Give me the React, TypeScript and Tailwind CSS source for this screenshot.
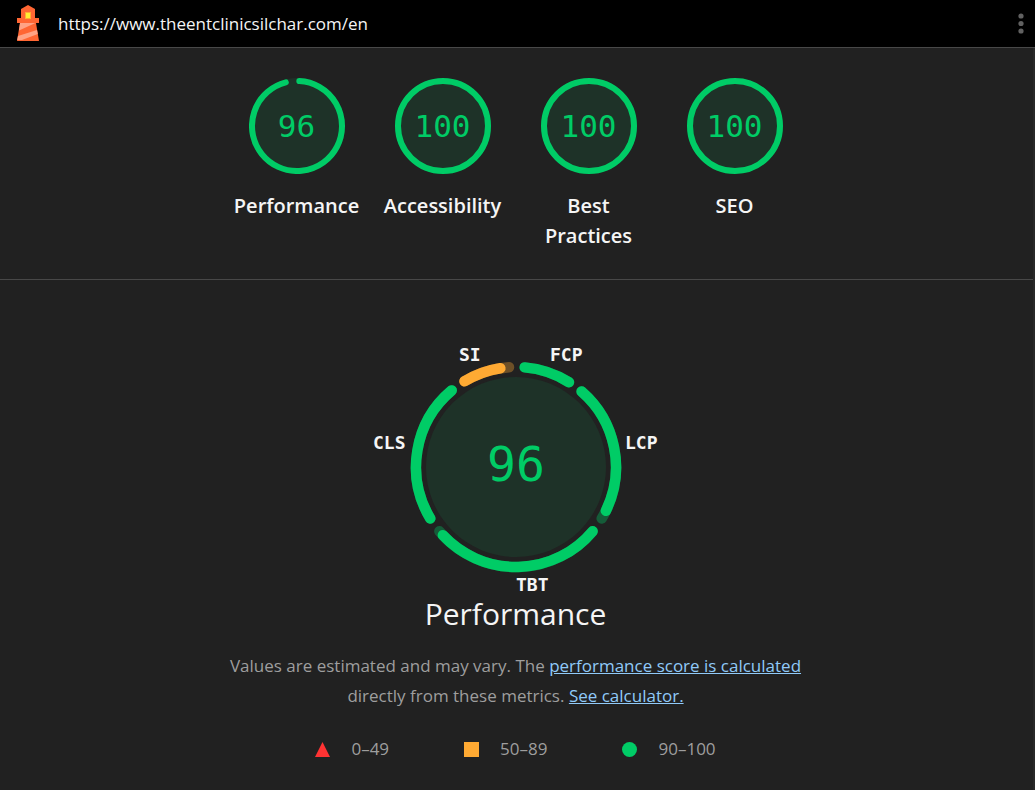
const sans = "font-['Open_Sans','Noto_Sans',sans-serif]";
const mono = "font-['DejaVu_Sans_Mono',monospace]";

type Category = { label: string; score: number };

const categories: Category[] = [
  { label: "Performance", score: 96 },
  { label: "Accessibility", score: 100 },
  { label: "Best Practices", score: 100 },
  { label: "SEO", score: 100 },
];

// Angles are clockwise degrees from twelve o'clock.
const metrics = [
  { id: "FCP", from: 5, to: 32, fill: [5, 32], color: "#00cc66", x: 190, y: 31 },
  { id: "LCP", from: 41, to: 121, fill: [41, 116], color: "#00cc66", x: 265, y: 119 },
  { id: "TBT", from: 130, to: 230, fill: [130, 227], color: "#00cc66", x: 156, y: 261 },
  { id: "CLS", from: 239, to: 320, fill: [239, 320], color: "#00cc66", x: 13, y: 119 },
  { id: "SI", from: 329, to: 356, fill: [329, 351], color: "#ffaa33", x: 99, y: 31 },
];

const legend = [
  { range: "0–49", shape: <polygon points="7.5,0 15,15 0,15" fill="#ff3333" /> },
  { range: "50–89", shape: <rect width="15" height="15" fill="#ffaa33" /> },
  { range: "90–100", shape: <circle cx="7.5" cy="7.5" r="7.5" fill="#00cc66" /> },
];

function arc(cx: number, cy: number, r: number, from: number, to: number) {
  const point = (deg: number) => {
    const rad = (deg * Math.PI) / 180;
    return `${cx + r * Math.sin(rad)} ${cy - r * Math.cos(rad)}`;
  };
  return `M${point(from)} A${r} ${r} 0 ${to - from > 180 ? 1 : 0} 1 ${point(to)}`;
}

function LighthouseLogo() {
  return (
    <svg className="h-[38px] w-6" viewBox="0 0 24 38" aria-hidden>
      <path d="M12 0 19 4V13H23V18H20L23 36H1L4 18H1V13H5V4Z" fill="#ff6633" />
      <path d="M4 18H19.5L3 25.5ZM2 31 21 25 21.8 29 6 35H1.2Z" fill="#ffa385" />
      <rect x="9.5" y="7.5" width="5" height="6" fill="#ffee33" stroke="#ffaa33" />
    </svg>
  );
}

function Header() {
  return (
    <header className="flex h-12 items-center justify-between border-b border-[#484848] bg-black pr-2 pl-4">
      <div className="flex items-center gap-[18px]">
        <LighthouseLogo />
        <a href="https://www.theentclinicsilchar.com/en" className="text-[17px] text-[#f5f5f5]">
          https://www.theentclinicsilchar.com/en
        </a>
      </div>
      <button type="button" aria-label="Tools menu">
        <svg className="h-6 w-3" viewBox="0 0 12 24" fill="#616161" aria-hidden>
          <circle cx="6" cy="4" r="2.6" />
          <circle cx="6" cy="11.5" r="2.6" />
          <circle cx="6" cy="19" r="2.6" />
        </svg>
      </button>
    </header>
  );
}

function Gauge({ label, score }: Category) {
  return (
    <a href={`#${label}`} className="flex w-[146px] flex-col items-center">
      <div className="grid size-24 place-items-center">
        <svg className="col-start-1 row-start-1 size-24" viewBox="0 0 96 96" fill="none" aria-hidden>
          <circle cx="48" cy="48" r="48" fill="#1e3228" />
          {score === 100 ? (
            <circle cx="48" cy="48" r="45" stroke="#00cc66" strokeWidth="6" />
          ) : (
            <path
              d={arc(48, 48, 45, 3, score * 3.6)}
              stroke="#00cc66"
              strokeWidth="6"
              strokeLinecap="round"
            />
          )}
        </svg>
        <span className={`${mono} col-start-1 row-start-1 text-[31px] leading-none text-[#00cc66]`}>
          {score}
        </span>
      </div>
      <span className="mt-[17px] max-w-32 text-center text-[20px] leading-[30px] font-semibold text-[#f5f5f5]">
        {label}
      </span>
    </a>
  );
}

function PerformanceGauge() {
  return (
    <svg
      className={`${mono} h-[268px] w-[312px]`}
      viewBox="0 0 312 268"
      fill="none"
      role="img"
      aria-label="Performance score 96"
    >
      <circle cx="156" cy="137" r="90" fill="#1e3228" />
      {metrics.map((m) => (
        <g key={m.id} strokeWidth="10.5" strokeLinecap="round">
          <path d={arc(156, 137, 100, m.from, m.to)} stroke={m.color} strokeOpacity="0.35" />
          <path d={arc(156, 137, 100, m.fill[0], m.fill[1])} stroke={m.color} />
        </g>
      ))}
      {metrics.map((m) => (
        <text key={m.id} x={m.x} y={m.y} className="fill-[#f5f5f5] text-[18px] font-bold">
          {m.id}
        </text>
      ))}
      <text x="156" y="151" textAnchor="middle" className="fill-[#00cc66] text-[48px]">
        96
      </text>
    </svg>
  );
}

export default function App() {
  return (
    <div className={`${sans} flex min-h-screen flex-col bg-[#212121]`}>
      <Header />
      <main className="grow border-r-2 border-[#282828]">
        <nav
          className="flex justify-center border-b border-[#484848] pt-[30px] pr-0.5 pb-7"
          aria-label="Categories"
        >
          {categories.map((c) => (
            <Gauge key={c.label} {...c} />
          ))}
        </nav>

        <section className="flex flex-col items-center pt-[50px] pr-0.5">
          <PerformanceGauge />
          <h1 className="text-[30px] leading-8 text-[#f5f5f5]">Performance</h1>
          <p className="mt-[21px] max-w-[600px] text-center text-[17px] leading-[30px] text-[#9e9e9e]">
            Values are estimated and may vary. The{" "}
            <a href="#scoring" className="text-[#90caf9] underline">
              performance score is calculated
            </a>{" "}
            directly from these metrics.{" "}
            <a href="#calculator" className="text-[#90caf9] underline">
              See calculator.
            </a>
          </p>
          <ul className="mt-[23px] flex gap-[75px] text-[17px] leading-[30px] text-[#9e9e9e]">
            {legend.map((item) => (
              <li key={item.range} className="flex items-center gap-[21px]">
                <svg className="size-[15px]" viewBox="0 0 15 15" aria-hidden>
                  {item.shape}
                </svg>
                {item.range}
              </li>
            ))}
          </ul>
        </section>
      </main>
    </div>
  );
}
